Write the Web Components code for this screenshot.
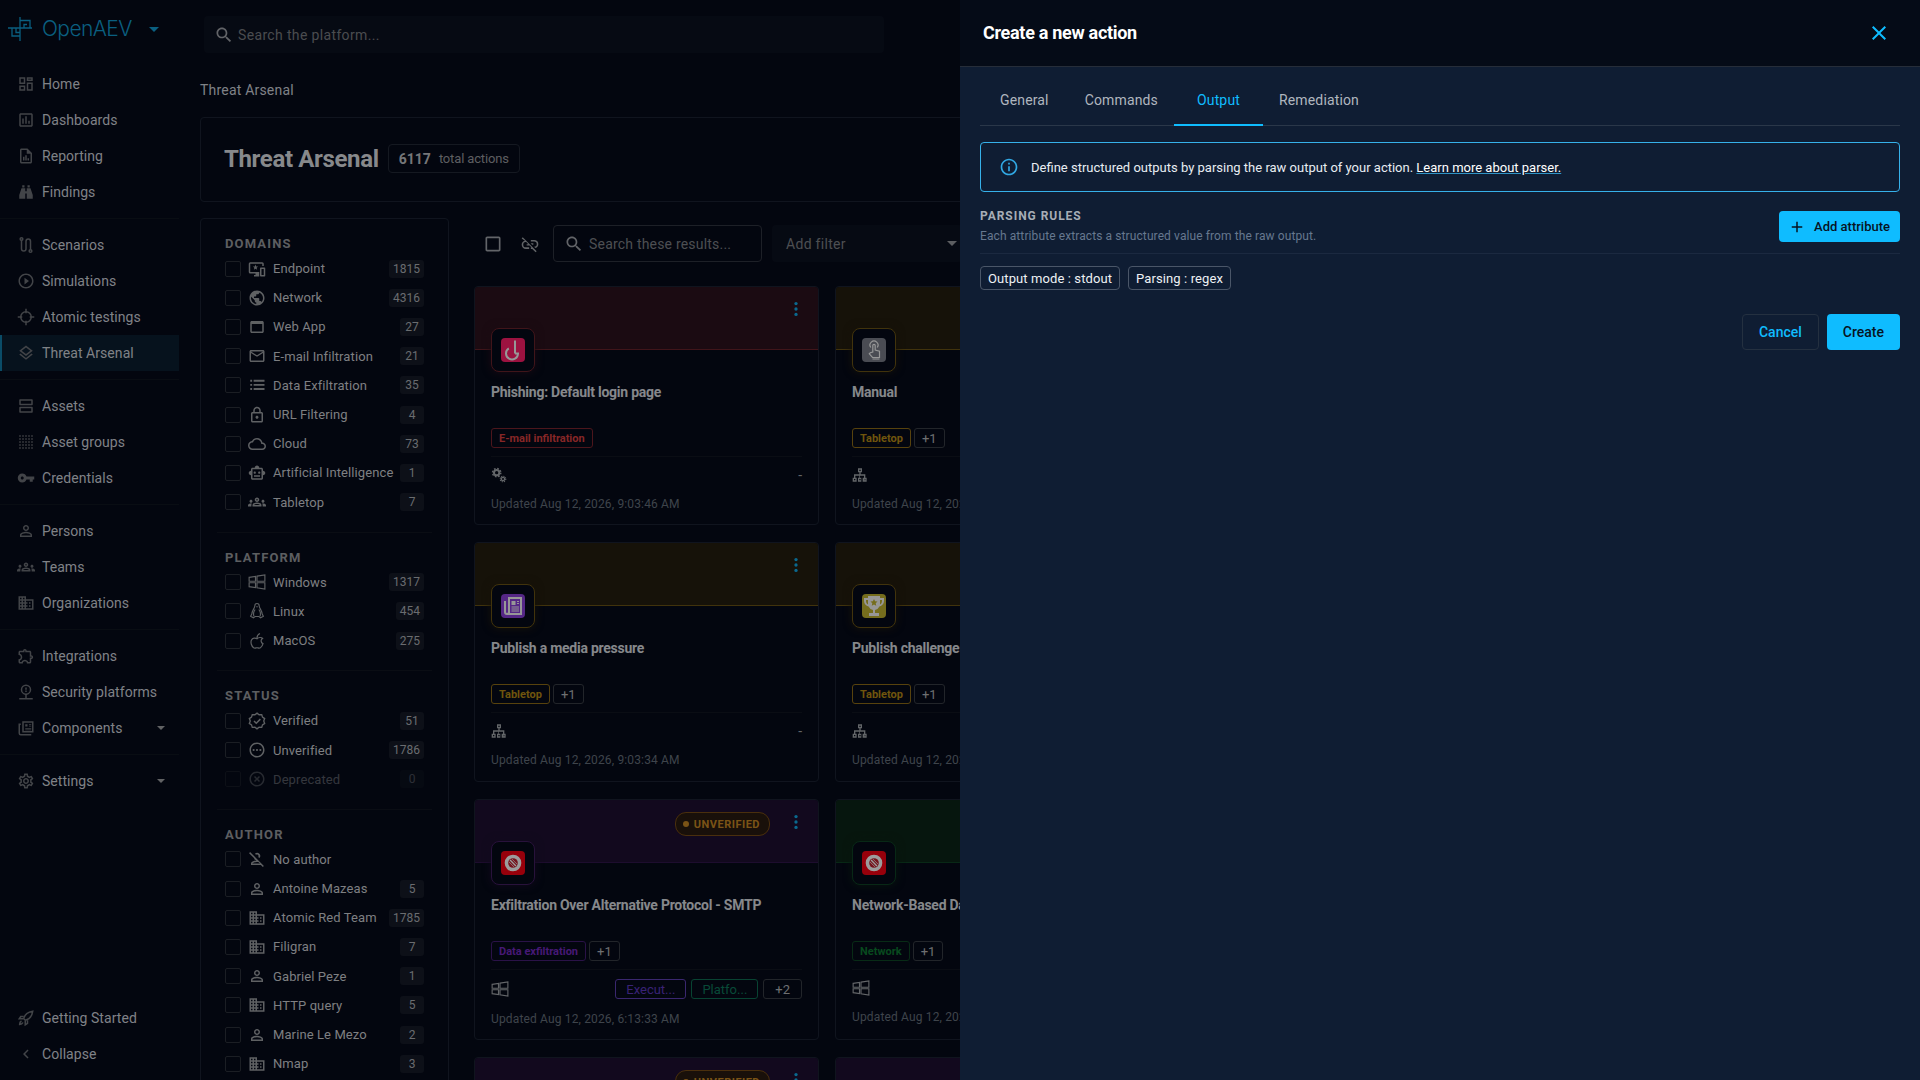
<!DOCTYPE html>
<html>
<head>
<meta charset="utf-8">
<title>OpenAEV</title>
<style>
  :root {
    --font: "Roboto", "Liberation Sans", sans-serif;
    --bg: #050916;
    --line: #171e2c;
    --text: #b7bac0;
    --icon: #5f6267;
    --teal: #0f96cc;
  }
  html, body { margin: 0; height: 100%; overflow: hidden; background: var(--bg); }
  body { font-family: var(--font); font-size: 14px; color: var(--text); }
</style>
</head>
<body>
<oa-app>
  <oa-topbar slot="top"></oa-topbar>
  <oa-sidebar slot="side">
    <oa-nav-item icon="home">Home</oa-nav-item>
    <oa-nav-item icon="chart">Dashboards</oa-nav-item>
    <oa-nav-item icon="report">Reporting</oa-nav-item>
    <oa-nav-item icon="binoculars">Findings</oa-nav-item>
    <oa-nav-divider></oa-nav-divider>
    <oa-nav-item icon="route">Scenarios</oa-nav-item>
    <oa-nav-item icon="play">Simulations</oa-nav-item>
    <oa-nav-item icon="crosshair">Atomic testings</oa-nav-item>
    <oa-nav-item icon="layers" active>Threat Arsenal</oa-nav-item>
    <oa-nav-divider></oa-nav-divider>
    <oa-nav-item icon="dns">Assets</oa-nav-item>
    <oa-nav-item icon="dots">Asset groups</oa-nav-item>
    <oa-nav-item icon="key">Credentials</oa-nav-item>
    <oa-nav-divider></oa-nav-divider>
    <oa-nav-item icon="person">Persons</oa-nav-item>
    <oa-nav-item icon="groups">Teams</oa-nav-item>
    <oa-nav-item icon="domain">Organizations</oa-nav-item>
    <oa-nav-divider></oa-nav-divider>
    <oa-nav-item icon="extension">Integrations</oa-nav-item>
    <oa-nav-item icon="pin">Security platforms</oa-nav-item>
    <oa-nav-item icon="feed" caret>Components</oa-nav-item>
    <oa-nav-divider></oa-nav-divider>
    <oa-nav-item icon="settings" caret>Settings</oa-nav-item>
    <oa-nav-item slot="bottom" icon="rocket">Getting Started</oa-nav-item>
    <oa-nav-item slot="bottom" icon="chevron">Collapse</oa-nav-item>
  </oa-sidebar>
  <oa-arsenal slot="main">
    <oa-filter-panel slot="filters">
      <oa-filter-group title="Domains">
        <oa-filter-row icon="endpoint" count="1815">Endpoint</oa-filter-row>
        <oa-filter-row icon="public" count="4316">Network</oa-filter-row>
        <oa-filter-row icon="webapp" count="27">Web App</oa-filter-row>
        <oa-filter-row icon="mail" count="21">E-mail Infiltration</oa-filter-row>
        <oa-filter-row icon="list" count="35">Data Exfiltration</oa-filter-row>
        <oa-filter-row icon="lock" count="4">URL Filtering</oa-filter-row>
        <oa-filter-row icon="cloud" count="73">Cloud</oa-filter-row>
        <oa-filter-row icon="robot" count="1">Artificial Intelligence</oa-filter-row>
        <oa-filter-row icon="groups" count="7">Tabletop</oa-filter-row>
      </oa-filter-group>
      <oa-filter-group title="Platform">
        <oa-filter-row icon="windows" count="1317">Windows</oa-filter-row>
        <oa-filter-row icon="linux" count="454">Linux</oa-filter-row>
        <oa-filter-row icon="apple" count="275">MacOS</oa-filter-row>
      </oa-filter-group>
      <oa-filter-group title="Status">
        <oa-filter-row icon="verified" count="51">Verified</oa-filter-row>
        <oa-filter-row icon="pending" count="1786">Unverified</oa-filter-row>
        <oa-filter-row icon="off" count="0" disabled>Deprecated</oa-filter-row>
      </oa-filter-group>
      <oa-filter-group title="Author" last>
        <oa-filter-row icon="personoff">No author</oa-filter-row>
        <oa-filter-row icon="person" count="5">Antoine Mazeas</oa-filter-row>
        <oa-filter-row icon="domain" count="1785">Atomic Red Team</oa-filter-row>
        <oa-filter-row icon="domain" count="7">Filigran</oa-filter-row>
        <oa-filter-row icon="person" count="1">Gabriel Peze</oa-filter-row>
        <oa-filter-row icon="domain" count="5">HTTP query</oa-filter-row>
        <oa-filter-row icon="person" count="2">Marine Le Mezo</oa-filter-row>
        <oa-filter-row icon="domain" count="3">Nmap</oa-filter-row>
      </oa-filter-group>
    </oa-filter-panel>
    <oa-toolbar slot="toolbar"></oa-toolbar>

    <oa-card slot="cards" tone="red" tile="hook" name="Phishing: Default login page" updated="Updated Aug 12, 2026, 9:03:46 AM" foot="gears" dash>
      <oa-tag slot="tags" tone="red">E-mail infiltration</oa-tag>
    </oa-card>
    <oa-card slot="cards" tone="yellow" tile="touch" name="Manual" updated="Updated Aug 12, 2026, 9:03:46 AM" foot="tree">
      <oa-tag slot="tags" tone="yellow">Tabletop</oa-tag><oa-tag slot="tags">+1</oa-tag>
    </oa-card>
    <oa-card slot="cards" tone="yellow" tile="news" name="Publish a media pressure" updated="Updated Aug 12, 2026, 9:03:34 AM" foot="tree" dash>
      <oa-tag slot="tags" tone="yellow">Tabletop</oa-tag><oa-tag slot="tags">+1</oa-tag>
    </oa-card>
    <oa-card slot="cards" tone="yellow" tile="trophy" name="Publish challenges" updated="Updated Aug 12, 2026, 9:03:34 AM" foot="tree">
      <oa-tag slot="tags" tone="yellow">Tabletop</oa-tag><oa-tag slot="tags">+1</oa-tag>
    </oa-card>
    <oa-card slot="cards" tone="purple" tile="ban" name="Exfiltration Over Alternative Protocol - SMTP" updated="Updated Aug 12, 2026, 6:13:33 AM" foot="windows" unverified>
      <oa-tag slot="tags" tone="purple">Data exfiltration</oa-tag><oa-tag slot="tags">+1</oa-tag>
      <oa-tag slot="foot" tone="violet" plain>Execut...</oa-tag><oa-tag slot="foot" tone="teal" plain>Platfo...</oa-tag><oa-tag slot="foot" plain wide>+2</oa-tag>
    </oa-card>
    <oa-card slot="cards" tone="green" tile="ban" name="Network-Based Data Exfiltration" updated="Updated Aug 12, 2026, 6:13:33 AM" foot="windows">
      <oa-tag slot="tags" tone="green">Network</oa-tag><oa-tag slot="tags">+1</oa-tag>
    </oa-card>
    <oa-card slot="cards" tone="purple" tile="ban" name="Exfiltration Over Alternative Protocol" updated="" foot="windows" unverified></oa-card>
    <oa-card slot="cards" tone="purple" tile="ban" name="Exfiltration Over C2 Channel" updated="" foot="windows"></oa-card>
  </oa-arsenal>

  <oa-drawer slot="overlay" heading="Create a new action">
    <oa-tabs>
      <oa-tab>General</oa-tab>
      <oa-tab>Commands</oa-tab>
      <oa-tab active>Output</oa-tab>
      <oa-tab>Remediation</oa-tab>
    </oa-tabs>
    <oa-alert>Define structured outputs by parsing the raw output of your action. <a>Learn more about parser.</a></oa-alert>
    <oa-rules heading="Parsing rules" hint="Each attribute extracts a structured value from the raw output.">
      <oa-chip>Output mode : stdout</oa-chip>
      <oa-chip>Parsing : regex</oa-chip>
    </oa-rules>
    <oa-actions>
      <oa-button variant="outline">Cancel</oa-button>
      <oa-button>Create</oa-button>
    </oa-actions>
  </oa-drawer>
</oa-app>

<script>
const ICONS = {
  home: '<path d="M3 3h8v9H3zm2 2v5h4V5zM13 3h8v5h-8zm2 2v1h4V5zM13 10h8v11h-8zm2 2v7h4v-7zM3 14h8v7H3zm2 2v3h4v-3z" fill-rule="evenodd"/>',
  chart: '<path d="M9 17H7v-7h2v7zm4 0h-2V7h2v10zm4 0h-2v-4h2v4zm2 2H5V5h14v14zm0-16H5c-1.100 0-2 .9-2 2v14c0 1.100.9 2 2 2h14c1.100 0 2-.9 2-2V5c0-1.100-.9-2-2-2z"/>',
  report: '<path d="M14 2H6c-1.100 0-2 .9-2 2v16c0 1.100.9 2 2 2h12c1.100 0 2-.9 2-2V8l-6-6zm4 18H6V4h7v5h5v11zM8 18h2v-5H8zm3 0h2v-7h-2zm3 0h2v-3h-2z"/>',
  binoculars: '<path d="M7 3h3v3H7zM14 3h3v3h-3zM6 7h5v4h2V7h5l3 9v5h-8v-7h-2v7H3v-5z"/>',
  route: '<g fill="none" stroke="currentColor" stroke-width="2"><path d="M6 5v12a3 3 0 0 0 6 0V7a3 3 0 0 1 6 0v11"/><circle cx="6" cy="4" r="1.800"/><circle cx="18" cy="20" r="1.800"/></g>',
  play: '<path d="M10 16.500l6-4.500-6-4.500v9zM12 2C6.480 2 2 6.480 2 12s4.480 10 10 10 10-4.480 10-10S17.520 2 12 2zm0 18c-4.410 0-8-3.590-8-8s3.590-8 8-8 8 3.590 8 8-3.590 8-8 8z"/>',
  crosshair: '<g fill="none" stroke="currentColor" stroke-width="2"><circle cx="12" cy="12" r="7"/><path d="M12 1v6M12 17v6M1 12h6M17 12h6"/></g>',
  layers: '<path d="M11.990 18.540l-7.370-5.730L3 14.070l9 7 9-7-1.630-1.270zM12 16l7.360-5.730L21 9l-9-7-9 7 1.630 1.270L12 16zm0-11.470L17.740 9 12 13.470 6.260 9 12 4.530z"/>',
  dns: '<path d="M19 15v4H5v-4h14m1-2H4c-.55 0-1 .45-1 1v6c0 .55.45 1 1 1h16c.55 0 1-.45 1-1v-6c0-.55-.45-1-1-1zM19 5v4H5V5h14m1-2H4c-.55 0-1 .45-1 1v6c0 .55.45 1 1 1h16c.55 0 1-.45 1-1V4c0-.55-.45-1-1-1z"/>',
  dots: '<g fill="currentColor"><rect x="3" y="3" width="2" height="2"/><rect x="7" y="3" width="2" height="2"/><rect x="11" y="3" width="2" height="2"/><rect x="15" y="3" width="2" height="2"/><rect x="19" y="3" width="2" height="2"/><rect x="3" y="7" width="2" height="2"/><rect x="7" y="7" width="2" height="2"/><rect x="11" y="7" width="2" height="2"/><rect x="15" y="7" width="2" height="2"/><rect x="19" y="7" width="2" height="2"/><rect x="3" y="11" width="2" height="2"/><rect x="7" y="11" width="2" height="2"/><rect x="11" y="11" width="2" height="2"/><rect x="15" y="11" width="2" height="2"/><rect x="19" y="11" width="2" height="2"/><rect x="3" y="15" width="2" height="2"/><rect x="7" y="15" width="2" height="2"/><rect x="11" y="15" width="2" height="2"/><rect x="15" y="15" width="2" height="2"/><rect x="19" y="15" width="2" height="2"/><rect x="3" y="19" width="2" height="2"/><rect x="7" y="19" width="2" height="2"/><rect x="11" y="19" width="2" height="2"/><rect x="15" y="19" width="2" height="2"/><rect x="19" y="19" width="2" height="2"/></g>',
  key: '<path d="M7 14c-1.100 0-2-.9-2-2s.9-2 2-2 2 .9 2 2-.9 2-2 2zm5.650-4A5.990 5.990 0 0 0 7 6c-3.310 0-6 2.690-6 6s2.690 6 6 6a5.990 5.990 0 0 0 5.650-4H17v3h4v-3h2v-4H12.650z"/>',
  person: '<path d="M12 5.900c1.160 0 2.100.94 2.100 2.100s-.94 2.100-2.100 2.100S9.900 9.160 9.900 8s.94-2.100 2.100-2.100m0 9c2.970 0 6.100 1.460 6.100 2.100v1.100H5.900V17c0-.64 3.130-2.100 6.100-2.100M12 4C9.790 4 8 5.790 8 8s1.790 4 4 4 4-1.790 4-4-1.790-4-4-4zm0 9c-2.670 0-8 1.340-8 4v3h16v-3c0-2.660-5.330-4-8-4z"/>',
  groups: '<path d="M4 13c1.100 0 2-.9 2-2s-.9-2-2-2-2 .9-2 2 .9 2 2 2zm1.130 1.100c-.37-.06-.74-.1-1.130-.1-.99 0-1.930.21-2.780.58C.48 14.900 0 15.620 0 16.430V18h4.500v-1.610c0-.83.23-1.610.63-2.290zM20 13c1.100 0 2-.9 2-2s-.9-2-2-2-2 .9-2 2 .9 2 2 2zm4 3.430c0-.81-.48-1.530-1.220-1.850-.85-.37-1.790-.58-2.780-.58-.39 0-.76.04-1.130.1.4.68.63 1.460.63 2.290V18H24v-1.570zm-7.760-2.780c-1.170-.52-2.610-.9-4.240-.9-1.630 0-3.070.39-4.240.9C6.680 14.130 6 15.210 6 16.390V18h12v-1.610c0-1.180-.68-2.260-1.760-2.740zM8.070 16c.09-.23.13-.39.91-.69.97-.38 1.990-.56 3.020-.56s2.050.18 3.020.56c.77.3.81.46.91.69H8.070zM12 8c.55 0 1 .45 1 1s-.45 1-1 1-1-.45-1-1 .45-1 1-1m0-2c-1.660 0-3 1.340-3 3s1.340 3 3 3 3-1.340 3-3-1.340-3-3-3z"/>',
  domain: '<path d="M12 7V3H2v18h20V7H12zM6 19H4v-2h2v2zm0-4H4v-2h2v2zm0-4H4V9h2v2zm0-4H4V5h2v2zm4 12H8v-2h2v2zm0-4H8v-2h2v2zm0-4H8V9h2v2zm0-4H8V5h2v2zm10 12h-8v-2h2v-2h-2v-2h2v-2h-2V9h8v10zm-2-8h-2v2h2v-2zm0 4h-2v2h2v-2z"/>',
  extension: '<path d="M10.500 4.500c.28 0 .5.22.5.5v2h6v6h2c.28 0 .5.22.5.5s-.22.5-.5.5h-2v6h-2.120c-.68-1.750-2.390-3-4.380-3s-3.700 1.250-4.380 3H4v-2.120c1.750-.68 3-2.390 3-4.380 0-1.990-1.240-3.700-2.990-4.380L4 7h6V5c0-.28.22-.5.5-.5m0-2C9.120 2.500 8 3.620 8 5H4c-1.100 0-1.990.9-1.990 2v3.800h.29c1.490 0 2.700 1.210 2.700 2.700s-1.210 2.700-2.700 2.700H2V20c0 1.100.9 2 2 2h3.800v-.3c0-1.490 1.210-2.700 2.700-2.700s2.700 1.210 2.700 2.700v.3H17c1.100 0 2-.9 2-2v-4c1.380 0 2.500-1.120 2.500-2.500S20.380 11 19 11V7c0-1.100-.9-2-2-2h-4c0-1.380-1.120-2.500-2.500-2.500z"/>',
  pin: '<path d="M12 2a7 7 0 0 0-7 7c0 3.600 2.600 6.100 6 6.900V20H3v2h18v-2h-8v-4.100c3.400-.8 6-3.300 6-6.900a7 7 0 0 0-7-7zm0 2a5 5 0 1 1 0 10 5 5 0 0 1 0-10zm-1 2v3h2V6zm0 4v2h2v-2z" fill-rule="evenodd"/>',
  feed: '<path d="M7 3h15v15H7zm2 2v11h11V5zM11 7h3v3h-3zm5 0h3v1h-3zm0 2h3v1h-3zm-5 3h8v1h-8zm0 2h8v1h-8zM2 6h3v2H4v11c0 .6.4 1 1 1h14v2H5a3 3 0 0 1-3-3z" fill-rule="evenodd"/>',
  settings: '<path d="M19.430 12.980c.04-.32.07-.64.07-.98 0-.34-.03-.66-.07-.98l2.110-1.650c.19-.15.24-.42.12-.64l-2-3.460c-.09-.16-.26-.25-.44-.25-.06 0-.12.01-.17.03l-2.490 1c-.52-.4-1.080-.73-1.690-.98l-.38-2.650C14.460 2.180 14.250 2 14 2h-4c-.25 0-.46.18-.49.42l-.38 2.650c-.61.25-1.170.59-1.690.98l-2.490-1c-.06-.02-.12-.03-.18-.03-.17 0-.34.09-.43.25l-2 3.460c-.13.22-.07.49.12.64l2.110 1.650c-.04.32-.07.65-.07.98 0 .33.03.66.07.98l-2.110 1.650c-.19.15-.24.42-.12.64l2 3.460c.09.16.26.25.44.25.06 0 .12-.01.17-.03l2.490-1c.52.4 1.080.73 1.690.98l.38 2.650c.03.24.24.42.49.42h4c.25 0 .46-.18.49-.42l.38-2.650c.61-.25 1.170-.59 1.690-.98l2.490 1c.06.02.12.03.18.03.17 0 .34-.09.43-.25l2-3.460c.12-.22.07-.49-.12-.64l-2.110-1.650zm-1.980-1.710c.04.31.05.52.05.73 0 .21-.02.43-.05.73l-.14 1.130.89.7 1.080.84-.7 1.210-1.270-.51-1.040-.42-.9.68c-.43.32-.84.56-1.250.73l-1.060.43-.16 1.130-.2 1.350h-1.400l-.19-1.350-.16-1.130-1.060-.43c-.43-.18-.83-.41-1.230-.71l-.91-.7-1.060.43-1.270.51-.7-1.210 1.080-.84.89-.7-.14-1.130c-.03-.31-.05-.54-.05-.74s.02-.43.05-.73l.14-1.130-.89-.7-1.080-.84.7-1.210 1.270.51 1.040.42.9-.68c.43-.32.84-.56 1.250-.73l1.060-.43.16-1.130.2-1.350h1.390l.19 1.350.16 1.130 1.060.43c.43.18.83.41 1.230.71l.91.7 1.060-.43 1.270-.51.7 1.210-1.070.85-.89.7.14 1.130zM12 8c-2.210 0-4 1.790-4 4s1.790 4 4 4 4-1.790 4-4-1.790-4-4-4zm0 6c-1.100 0-2-.9-2-2s.9-2 2-2 2 .9 2 2-.9 2-2 2z"/>',
  rocket: '<g fill="none" stroke="currentColor" stroke-width="2"><path d="M9 13c1-5 5-9 12-10-1 7-5 11-10 12z"/><path d="M9 10H5l-2 3h5M14 15v4l-3 2v-5"/><path d="M6 16c-2 1-2.500 3-2.500 4.500C5 20.500 7 20 8 18"/></g>',
  chevron: '<path d="M15.400 7.400 14 6l-6 6 6 6 1.400-1.400L10.800 12z"/>',
  endpoint: '<path d="M21 3H3a2 2 0 0 0-2 2v11a2 2 0 0 0 2 2h7v2H8v2h7v-6H3V5h16v3h2V5a2 2 0 0 0-2-2zM22 10h-5a1 1 0 0 0-1 1v10a1 1 0 0 0 1 1h5a1 1 0 0 0 1-1V11a1 1 0 0 0-1-1zm-1 10h-3v-8h3zM10 6l1 2.500h2.500l-2 1.800.7 2.700-2.200-1.500L7.800 13l.7-2.700-2-1.800H9z" fill-rule="evenodd"/>',
  public: '<path d="M12 2C6.480 2 2 6.480 2 12s4.480 10 10 10 10-4.480 10-10S17.520 2 12 2zm-1 17.930c-3.950-.49-7-3.850-7-7.930 0-.62.08-1.210.21-1.790L9 15v1c0 1.100.9 2 2 2v1.930zm6.900-2.540c-.26-.81-1-1.390-1.900-1.390h-1v-3c0-.55-.45-1-1-1H8v-2h2c.55 0 1-.45 1-1V7h2c1.100 0 2-.9 2-2v-.41c2.930 1.190 5 4.060 5 7.410 0 2.080-.8 3.970-2.100 5.390z"/>',
  webapp: '<path d="M19 4H5c-1.110 0-2 .9-2 2v12c0 1.100.89 2 2 2h14c1.100 0 2-.9 2-2V6c0-1.100-.89-2-2-2zm0 14H5V8h14v10z"/>',
  mail: '<path d="M20 4H4c-1.100 0-1.990.9-1.990 2L2 18c0 1.100.9 2 2 2h16c1.100 0 2-.9 2-2V6c0-1.100-.9-2-2-2zm0 14H4V8l8 5 8-5v10zm-8-7L4 6h16l-8 5z"/>',
  list: '<path d="M3 5h2.500v2.500H3zM7.500 5H22v2.500H7.500zM3 10.500h2.500V13H3zM7.500 10.500H22V13H7.500zM3 16h2.500v2.500H3zM7.500 16H22v2.500H7.500z"/>',
  lock: '<path d="M18 8h-1V6c0-2.760-2.240-5-5-5S7 3.240 7 6v2H6c-1.100 0-2 .9-2 2v10c0 1.100.9 2 2 2h12c1.100 0 2-.9 2-2V10c0-1.100-.9-2-2-2zM9 6c0-1.660 1.340-3 3-3s3 1.340 3 3v2H9V6zm9 14H6V10h12v10zm-6-3c1.100 0 2-.9 2-2s-.9-2-2-2-2 .9-2 2 .9 2 2 2z"/>',
  cloud: '<path d="M12 6c2.620 0 4.880 1.860 5.390 4.430l.3 1.500 1.530.11c1.560.1 2.780 1.410 2.780 2.960 0 1.650-1.350 3-3 3H6c-2.210 0-4-1.790-4-4 0-2.050 1.530-3.760 3.560-3.970l1.070-.11.5-.95C8.080 7.140 9.940 6 12 6m0-2C9.110 4 6.600 5.640 5.350 8.040 2.340 8.360 0 10.910 0 14c0 3.310 2.690 6 6 6h13c2.760 0 5-2.240 5-5 0-2.640-2.050-4.780-4.650-4.960C18.670 6.590 15.640 4 12 4z"/>',
  robot: '<path d="M20 9V7c0-1.100-.9-2-2-2h-3c0-1.660-1.340-3-3-3S9 3.340 9 5H6c-1.100 0-2 .9-2 2v2c-1.660 0-3 1.340-3 3s1.340 3 3 3v4c0 1.100.9 2 2 2h12c1.100 0 2-.9 2-2v-4c1.660 0 3-1.340 3-3s-1.340-3-3-3zm-2 10H6V7h12v12zm-9-6c-.83 0-1.500-.67-1.500-1.500S8.170 10 9 10s1.500.67 1.500 1.500S9.830 13 9 13zm7.500-1.500c0 .83-.67 1.500-1.500 1.500s-1.500-.67-1.500-1.500.67-1.500 1.500-1.500 1.500.67 1.500 1.500zM8 15h8v2H8v-2z"/>',
  windows: '<path d="M1.500 5.800 10 4.500V11H1.500zM12 4.200 22.500 2.500V11H12zM1.500 13H10v6.500l-8.500-1.300zM12 13h10.500v8.500L12 19.800z" fill="none" stroke="currentColor" stroke-width="1.500"/>',
  linux: '<g fill="none" stroke="currentColor" stroke-width="1.500"><path d="M12 2c-1.900 0-3 1.500-3 3.500 0 2.700-3.800 6-3.800 10.300L3.500 19l3.700 2 2.300-1.600h5l2.300 1.600 3.700-2-1.700-3.200C18.800 11.500 15 8.200 15 5.500 15 3.500 13.900 2 12 2z"/><path d="M9.500 10c-1.800 2.500-2.600 6-1.600 9M14.500 10c1.800 2.500 2.600 6 1.600 9"/></g><circle cx="12" cy="6.300" r="1"/>',
  apple: '<g fill="none" stroke="currentColor" stroke-width="1.600"><path d="M12 9c-2-1.500-6-1.500-7.500 2-1.200 3 0 8 3 10 1.500 1 3.500 0 4.500 0s3 1 4.500 0c2-1.400 3-3.500 3.500-5.500-3-1-3.500-5.500-.5-7-1.500-1.800-5.500-1.500-7.500.5z"/><path d="M12 8c0-2.500 1.500-5 4-6"/></g>',
  verified: '<path d="M12 1.500l2.800 2.100 3.500-.1 1 3.300 2.900 2L21 12l1.200 3.200-2.900 2-1 3.300-3.500-.1L12 22.500l-2.800-2.100-3.500.1-1-3.300-2.900-2L3 12 1.800 8.800l2.900-2 1-3.300 3.500.1z" fill="none" stroke="currentColor" stroke-width="1.800"/><path d="M8 12l3 3 5.500-5.500" fill="none" stroke="currentColor" stroke-width="2"/>',
  pending: '<path d="M12 2C6.480 2 2 6.480 2 12s4.480 10 10 10 10-4.480 10-10S17.520 2 12 2zm0 18c-4.420 0-8-3.580-8-8s3.580-8 8-8 8 3.580 8 8-3.580 8-8 8z"/><circle cx="7.500" cy="12" r="1.400"/><circle cx="12" cy="12" r="1.400"/><circle cx="16.500" cy="12" r="1.400"/>',
  off: '<path d="M14.590 8 12 10.590 9.410 8 8 9.410 10.590 12 8 14.590 9.410 16 12 13.410 14.590 16 16 14.590 13.410 12 16 9.410zM12 2C6.470 2 2 6.470 2 12s4.470 10 10 10 10-4.470 10-10S17.530 2 12 2zm0 18c-4.410 0-8-3.590-8-8s3.590-8 8-8 8 3.590 8 8-3.590 8-8 8z"/>',
  personoff: '<path d="M12 5.900c1.160 0 2.100.94 2.100 2.100 0 .5-.17.96-.46 1.320l1.400 1.400A4 4 0 0 0 9.280 5l1.400 1.400c.36-.3.82-.5 1.320-.5zM2.800 2.800 1.400 4.200 8 10.800a4 4 0 0 0 3.200 3.200C8 14.200 4 15.600 4 18v2h13.200l2.600 2.600 1.400-1.400zM5.900 18c.2-.7 3-2 6.100-2 .8 0 1.500.1 2.200.2L16 18z"/>',
  gears: '<g fill="none" stroke="currentColor"><circle cx="8.500" cy="8.500" r="4" stroke-width="3"/><circle cx="8.500" cy="8.500" r="6.200" stroke-width="2.200" stroke-dasharray="2.500 2.370"/><circle cx="18" cy="18" r="2.500" stroke-width="2"/><circle cx="18" cy="18" r="4.200" stroke-width="1.600" stroke-dasharray="1.800 1.500"/></g>',
  tree: '<path d="M9 2h6v6h-2v3h7v5h2v6h-6v-6h2v-3h-6v3h2v6H9v-6h2v-3H5v3h2v6H1v-6h2v-5h8V8H9zm2 2v2h2V4zM3 18v2h2v-2zm8 0v2h2v-2zm8 0v2h1v-2z" fill-rule="evenodd"/>',
  search: '<path d="M15.500 14h-.79l-.28-.27C15.410 12.590 16 11.110 16 9.500 16 5.910 13.090 3 9.500 3S3 5.910 3 9.500 5.910 16 9.500 16c1.610 0 3.090-.59 4.230-1.570l.27.28v.79l5 4.990L20.490 19l-4.990-5zm-6 0C7.010 14 5 11.990 5 9.500S7.010 5 9.500 5 14 7.010 14 9.500 11.990 14 9.500 14z"/>',
  checkbox: '<path d="M19 5v14H5V5h14m0-2H5c-1.100 0-2 .9-2 2v14c0 1.100.9 2 2 2h14c1.100 0 2-.9 2-2V5c0-1.100-.9-2-2-2z"/>',
  linkoff: '<path d="M2 5.270 3.280 4 20 20.720 18.730 22l-4.050-4.050H13v-1.900h.78l-2.270-2.270H8v-1.600h1.910L7.430 9.700A3.100 3.100 0 0 0 3.900 12.800 3.100 3.100 0 0 0 7 15.950h4v1.900H7a5 5 0 0 1-5-5 5 5 0 0 1 3.900-4.870zM17 7.050a5 5 0 0 1 5 5 5 5 0 0 1-3.500 4.770l-1.600-1.600A3.100 3.100 0 0 0 20.100 12 3.100 3.100 0 0 0 17 8.950h-4v-1.900zM16 11.200v1.600h-1.500l-1.600-1.600z"/>',
  more: '<circle cx="12" cy="5.500" r="2"/><circle cx="12" cy="12" r="2"/><circle cx="12" cy="18.500" r="2"/>',
  close: '<path d="M19 6.410 17.590 5 12 10.590 6.410 5 5 6.410 10.590 12 5 17.590 6.410 19 12 13.410 17.590 19 19 17.590 13.410 12z"/>',
  info: '<path d="M11 7h2v2h-2zm0 4h2v6h-2zm1-9C6.480 2 2 6.480 2 12s4.480 10 10 10 10-4.480 10-10S17.520 2 12 2zm0 18c-4.410 0-8-3.590-8-8s3.590-8 8-8 8 3.590 8 8-3.590 8-8 8z"/>',
  plus: '<path d="M19 13h-6v6h-2v-6H5v-2h6V5h2v6h6z"/>',
  hook: '<path d="M14 2.500v13M7.800 10.400A6 6 0 1 0 17 15.500H14" fill="none" stroke="currentColor" stroke-width="2"/>',
  touch: '<g fill="none" stroke="currentColor" stroke-width="1.200"><path d="M8.800 9.500a4 4 0 1 1 6.400 0"/><path d="M10.800 14V7.500a1.200 1.200 0 0 1 2.400 0V12l4.300 1.200V19.500H10.500L7.300 15.800l1-1z"/><path d="M10.500 21h7"/></g>',
  news: '<path d="M6 3h15v18H6a3 3 0 0 1-3-3V7h2v11a1 1 0 0 0 2 0V3zM9 5v14h10V5zM10.500 7h4v4h-4zM16 7h2v1h-2zm0 2h2v1h-2zM10.500 12.500H18v1h-7.500zm0 2H18v1h-7.500zm0 2H18v1h-7.500z" fill-rule="evenodd"/>',
  trophy: '<path d="M6 2h12v2h4v3c0 2.800-2 5-4.600 5.400A6 6 0 0 1 13 15.900V19h4v3H7v-3h4v-3.100a6 6 0 0 1-4.400-3.500C4 12 2 9.800 2 7V4h4zM4 6v1c0 1.600 1 3 2 3.400V6zm16 0h-2v4.400c1-.4 2-1.800 2-3.400zM12 5l1.100 2.300 2.400.3-1.800 1.700.5 2.400-2.200-1.200-2.200 1.200.5-2.400-1.800-1.700 2.400-.3z" fill-rule="evenodd"/>',
  ban: '<circle cx="12" cy="12" r="10" fill="#e0e0e0"/><circle cx="12" cy="12" r="5.800" fill="#a81c2a"/><path d="M8.500 8.500l7 7" stroke="#e0e0e0" stroke-width="1.600"/><path d="M10.500 7l6.500 6.500M7 10.500l6.500 6.500" stroke="#e0e0e0" stroke-width=".8"/>'
};

// every element builds its shadow root the same way
class OaElement extends HTMLElement {
  constructor() {
    super();
    this.attachShadow({ mode: "open" });
  }
  connectedCallback() {
    this.shadowRoot.innerHTML = this.render();
  }
  attr(name, fallback = "") {
    return this.hasAttribute(name) ? this.getAttribute(name) : fallback;
  }
}

const svg = (name, size) => `<oa-icon name="${name}" size="${size}"></oa-icon>`;

class OaIcon extends OaElement {
  render() {
    const size = this.attr("size", "24");
    return `<style>:host{display:inline-flex;flex:none;width:${size}px;height:${size}px}svg{width:100%;height:100%;display:block;fill:currentColor}</style>
      <svg viewBox="0 0 24 24">${ICONS[this.attr("name")] || ""}</svg>`;
  }
}

class OaApp extends OaElement {
  render() {
    return `<style>
      :host{display:block;position:relative;width:1920px;height:1080px;overflow:hidden;background:var(--bg)}
      .body{display:flex;height:1014px}
      .backdrop{position:absolute;inset:0;background:rgba(0,0,0,.3)}
    </style>
    <slot name="top"></slot>
    <div class="body"><slot name="side"></slot><slot name="main"></slot></div>
    <div class="backdrop"></div>
    <slot name="overlay"></slot>`;
  }
}

class OaTopbar extends OaElement {
  render() {
    return `<style>
      :host{display:flex;height:66px;box-sizing:border-box;padding-top:16px}
      .brand{width:204px;display:flex;height:26px;align-items:center;padding-left:8px;box-sizing:border-box;color:#0f88b8}
      .brand svg{width:24px;height:24px;flex:none;fill:none;stroke:currentColor;stroke-width:1.300}
      .name{font:300 21px/26px Inter,var(--font);letter-spacing:-.6px;margin-left:10px}
      .caret{width:0;height:0;border:5px solid transparent;border-top-color:currentColor;border-bottom:0;margin-left:17px}
      .search{width:680px;height:37px;background:#0a0f1c;border-radius:4px;display:flex;align-items:center;padding-left:10px;box-sizing:border-box;color:#8d9095;gap:4px}
      .search span{color:#6a6d72;font-size:14px;letter-spacing:.35px}
    </style>
    <div class="brand">
      <svg viewBox="0 0 24 24"><path d="M0 11h24M12 0v24M12 3.500h10V11M16 11V7.500h3M4 11v8h8M8 11v4.500h4"/></svg>
      <span class="name">OpenAEV</span><i class="caret"></i>
    </div>
    <div class="search">${svg("search", 20)}<span>Search the platform...</span></div>`;
  }
}

class OaSidebar extends OaElement {
  render() {
    return `<style>
      :host{display:flex;flex-direction:column;width:180px;flex:none;height:1014px;padding-bottom:8px;box-sizing:border-box}
      .bottom{margin-top:auto}
    </style>
    <slot></slot>
    <div class="bottom"><slot name="bottom"></slot></div>`;
  }
}

class OaNavItem extends OaElement {
  render() {
    const active = this.hasAttribute("active");
    return `<style>
      :host{display:flex;align-items:center;height:36px;width:179px;box-sizing:border-box;padding-left:17px;gap:7px;color:var(--text);font-size:14px;letter-spacing:.05px;
        ${active ? "background:#0a1a2a;box-shadow:inset 2px 0 0 #0f6d94;" : ""}}
      oa-icon{color:var(--icon)}
      .wrap{flex:1}
      .c{width:0;height:0;border:4.500px solid transparent;border-top-color:#8b8d90;border-bottom:0;margin-right:14px}
    </style>
    ${svg(this.attr("icon"), 18)}
    <span class="wrap"><slot></slot></span>
    ${this.hasAttribute("caret") ? '<i class="c"></i>' : ""}`;
  }
}

class OaNavDivider extends OaElement {
  render() {
    return `<style>:host{display:block;width:179px;height:1px;background:#0e131c;margin:8px 0}</style>`;
  }
}

class OaArsenal extends OaElement {
  render() {
    return `<style>
      :host{display:block;flex:1;min-width:0;padding:14px 0 0 20px;overflow:hidden}
      .crumb{line-height:20px;font-size:14px;letter-spacing:.2px;color:var(--text);margin-bottom:17px}
      .head{display:flex;align-items:center;height:85px;box-sizing:border-box;border:1px solid var(--line);border-radius:4px;padding:0 0 2px 23px;margin-bottom:16px}
      h1{margin:0;font:700 24px/32px Roboto,var(--font);letter-spacing:-.35px;color:#c2c4c8}
      .total{display:flex;align-items:center;height:27px;margin-left:9px;padding:0 10px;border:1px solid #1f2430;border-radius:4px;font-size:13px;letter-spacing:-.15px;color:#85878b;gap:8px}
      .total b{color:#a8aaad;font-size:14px;letter-spacing:0}
      .cols{display:grid;grid-template-columns:249px 1fr;column-gap:25px}
      .cards{display:grid;grid-template-columns:345px 345px;grid-template-rows:239px 240px 241px 200px;gap:17px 16px;margin-top:24px}
    </style>
    <div class="crumb">Threat Arsenal</div>
    <div class="head"><h1>Threat Arsenal</h1><div class="total"><b>6117</b><span>total actions</span></div></div>
    <div class="cols">
      <slot name="filters"></slot>
      <div><slot name="toolbar"></slot><div class="cards"><slot name="cards"></slot></div></div>
    </div>`;
  }
}

class OaFilterPanel extends OaElement {
  render() {
    return `<style>:host{display:block;height:900px;box-sizing:border-box;border:1px solid var(--line);border-radius:4px;padding:16px 16px 0}</style><slot></slot>`;
  }
}

class OaFilterGroup extends OaElement {
  render() {
    const last = this.hasAttribute("last");
    return `<style>
      :host{display:block;padding:0 0 ${last ? 0 : 15}px;margin-bottom:16px;${last ? "" : "border-bottom:1px solid #0f141e;"}}
      .t{padding-left:8px;height:19px;font:700 13px/18px Roboto,var(--font);letter-spacing:1.150px;text-transform:uppercase;color:#85878b}
    </style>
    <div class="t">${this.attr("title")}</div><slot></slot>`;
  }
}

class OaFilterRow extends OaElement {
  render() {
    const count = this.attr("count");
    const off = this.hasAttribute("disabled");
    return `<style>
      :host{display:flex;align-items:center;height:29.200px;padding:0 8px;${off ? "opacity:.4;" : ""}}
      .box{width:14px;height:14px;border:1px solid #282c34;border-radius:2px;flex:none}
      oa-icon{margin:0 7px 0 7px;color:#888b8f}
      .label{flex:1;white-space:nowrap;font-size:13px;letter-spacing:.1px;color:#b4b6ba}
      .count{min-width:12px;height:18px;line-height:18px;padding:0 4px;text-align:center;background:#131823;border-radius:3px;font-size:12px;color:#989ba0;margin-left:auto}
      .count.s{min-width:16px}
    </style>
    <i class="box"></i>${svg(this.attr("icon"), 18)}
    <span class="label"><slot></slot></span>
    ${count ? `<span class="count ${count.length < 3 ? "s" : ""}">${count}</span>` : ""}`;
  }
}

class OaToolbar extends OaElement {
  render() {
    return `<style>
      :host{display:flex;align-items:center;height:37px;margin-top:7px;color:#8d9095}
      .a{display:flex;width:36px;margin-left:1px;justify-content:center;margin-right:1px}
      .b{display:flex;width:36px;justify-content:center;margin-right:5px}
      .search{width:209px;height:37px;box-sizing:border-box;border:1px solid #2a2f38;border-radius:4px;display:flex;align-items:center;padding-left:10px;gap:5px;margin-right:10px}
      .search span{color:#6f7276;font-size:14px;letter-spacing:.2px}
      .filter{width:190px;height:37px;background:#0a0f1c;border-radius:4px;display:flex;align-items:center;padding:0 5px 0 14px;box-sizing:border-box;justify-content:space-between;color:#6f7276;font-size:14px;letter-spacing:.3px}
      i{width:0;height:0;border:5px solid transparent;border-top-color:#85878b;border-bottom:0}
    </style>
    <span class="a">${svg("checkbox", 20)}</span>
    <span class="b">${svg("linkoff", 20)}</span>
    <div class="search">${svg("search", 20)}<span>Search these results...</span></div>
    <div class="filter"><span>Add filter</span><i></i></div>`;
  }
}

const TONES = {
  red:    { band: "#27101a", line: "#5c1f26", tile: "#5c1f26" },
  yellow: { band: "#201a0d", line: "#5e4a12", tile: "#5e4a12" },
  purple: { band: "#1a0e2b", line: "#2a1342", tile: "#3a1a55" },
  green:  { band: "#0a2015", line: "#0c3a20", tile: "#0c3a20" }
};
const TILES = { hook: "#e01a5c", touch: "#6a6e78", news: "#7a38c0", trophy: "#a89c2a", ban: "#d80010" };

class OaCard extends OaElement {
  render() {
    const tone = TONES[this.attr("tone")] || TONES.red;
    const tile = this.attr("tile");
    const foot = this.attr("foot");
    const pill = this.hasAttribute("unverified")
      ? `<div class="pill"><i></i>UNVERIFIED</div>` : "";
    return `<style>
      :host{display:block;position:relative;box-sizing:border-box;border:1px solid var(--line);border-radius:4px;overflow:hidden}
      .band{height:63px;box-sizing:border-box;background:${tone.band};border-bottom:1px solid ${tone.line}}
      .pill{position:absolute;top:12px;right:48px;height:22px;display:flex;align-items:center;gap:5px;padding:0 9px 0 7px;border:1px solid #6b4413;border-radius:11px;background:#24180f;font:700 11px/1 Roboto,var(--font);letter-spacing:.5px;color:#b07820}
      .pill i{width:6px;height:6px;border-radius:50%;background:#b07820}
      .more{position:absolute;top:12px;right:12px;color:var(--teal)}
      .body{padding:0 16px}
      .tilebox{width:44px;height:44px;box-sizing:border-box;margin-top:-22px;border:1px solid ${tone.tile};border-radius:8px;background:var(--bg);display:flex;align-items:center;justify-content:center;position:relative;box-shadow:0 0 8px ${tone.band}}
      .tile{width:24px;height:24px;border-radius:4px;background:${TILES[tile]};display:flex;align-items:center;justify-content:center;color:#d8d8d8}
      .name{margin-top:10px;height:20px;line-height:20px;font-weight:700;font-size:14px;letter-spacing:-.25px;color:#c0c3c8;white-space:nowrap}
      .tags{display:flex;gap:3px;margin-top:26px;height:20px}
      .foot{display:flex;align-items:center;justify-content:space-between;margin-top:8px;padding-top:9px;border-top:1px solid #0f141e;min-height:18px;color:#8f9297}
      .foot .r{display:flex;gap:5px;align-items:center;font-size:14px;color:#8f9195}
      .upd{margin-top:10px;line-height:20px;font-size:12px;letter-spacing:.15px;color:#5a626c;white-space:nowrap}
    </style>
    <div class="band"></div>${pill}
    <span class="more">${svg("more", 20)}</span>
    <div class="body">
      <div class="tilebox"><div class="tile">${svg(tile, tile === "ban" ? 20 : 24)}</div></div>
      <div class="name">${this.attr("name")}</div>
      <div class="tags"><slot name="tags"></slot></div>
      <div class="foot">${svg(foot, foot === "windows" ? 18 : 16)}
        <div class="r"><slot name="foot"></slot>${this.hasAttribute("dash") ? "<span>-</span>" : ""}</div>
      </div>
      <div class="upd">${this.attr("updated")}</div>
    </div>`;
  }
}

const TAG_TONES = {
  red: ["#6d2029", "#c03838"], yellow: ["#7d5f14", "#a07a14"], purple: ["#3d1a66", "#6624a8"],
  green: ["#0c3e20", "#0c6a2c"], violet: ["#53389f", "#5231a8"], teal: ["#0c6048", "#0c6a50"]
};

class OaTag extends OaElement {
  render() {
    const [border, color] = TAG_TONES[this.attr("tone")] || ["#32363d", "#9ea0a3"];
    const plain = this.hasAttribute("plain");
    const toned = this.hasAttribute("tone") && !plain;
    return `<style>
      :host{display:inline-flex;align-items:center;justify-content:center;height:20px;box-sizing:border-box;border:1px solid ${border};border-radius:3px;
        padding:0 ${this.hasAttribute("wide") ? 11 : plain ? 10 : 7}px;color:${color};font-size:${toned ? 11 : 13}px;font-weight:${toned ? 700 : 400};white-space:nowrap}
    </style><slot></slot>`;
  }
}

class OaDrawer extends OaElement {
  render() {
    return `<style>
      :host{position:absolute;top:0;right:0;bottom:0;width:960px;background:#0f1d33;display:block;color:#fff}
      header{height:67px;box-sizing:border-box;background:#050b17;border-bottom:1px solid #262d39;display:flex;align-items:center;justify-content:space-between;padding:0 29px 0 23px}
      h2{margin:0;font:700 18px/24px Roboto,var(--font);letter-spacing:-.3px}
      .x{color:#0fbcff;display:flex}
      .content{padding:0 20px}
    </style>
    <header><h2>${this.attr("heading")}</h2><span class="x">${svg("close", 24)}</span></header>
    <div class="content"><slot></slot></div>`;
  }
}

class OaTabs extends OaElement {
  render() {
    return `<style>:host{display:flex;height:59px;box-sizing:border-box;border-bottom:1px solid #2a3749}</style><slot></slot>`;
  }
}

class OaTab extends OaElement {
  render() {
    const active = this.hasAttribute("active");
    return `<style>
      :host{display:flex;align-items:center;justify-content:center;box-sizing:border-box;height:59px;margin-right:-4px;font-size:14px;letter-spacing:.15px;
        padding:${active ? "9px 23px 0" : "7px 20px 0"};
        color:${active ? "#0fbcff" : "#b0b6bf"};${active ? "border-bottom:2px solid #0fbcff;" : ""}}
    </style><slot></slot>`;
  }
}

class OaAlert extends OaElement {
  render() {
    return `<style>
      :host{display:flex;align-items:center;height:50px;box-sizing:border-box;margin-top:16px;border:1px solid #36b1ea;border-radius:4px;padding-left:18px;gap:12px;font-size:13px;color:#e8edf2}
      oa-icon{color:#31a8e3}
      ::slotted(a){color:#fff;text-decoration:underline;text-decoration-color:#2f93c5}
    </style>${svg("info", 20)}<span><slot></slot></span>`;
  }
}

class OaRules extends OaElement {
  render() {
    return `<style>
      :host{display:block;margin-top:19px}
      .top{display:flex;justify-content:space-between;height:42px;border-bottom:1px solid #1b2940;align-items:flex-start}
      h3{margin:-3px 0 0;font:700 12px/16px Roboto,var(--font);letter-spacing:.95px;text-transform:uppercase;color:#a7adb6}
      p{margin:4px 0 0;font-size:12px;line-height:16px;letter-spacing:.1px;color:#66788f}
      .chips{display:flex;gap:8px;margin-top:12px}
    </style>
    <div class="top">
      <div><h3>${this.attr("heading")}</h3><p>${this.attr("hint")}</p></div>
      <oa-button small icon="plus">Add attribute</oa-button>
    </div>
    <div class="chips"><slot></slot></div>`;
  }
}

class OaChip extends OaElement {
  render() {
    return `<style>:host{display:inline-flex;align-items:center;height:24px;box-sizing:border-box;padding:0 7px;border:1px solid #4a5668;border-radius:4px;font-size:13px;letter-spacing:.1px;color:#eef1f4}</style><slot></slot>`;
  }
}

class OaActions extends OaElement {
  render() {
    return `<style>:host{display:flex;justify-content:flex-end;gap:8px;margin-top:24px}</style><slot></slot>`;
  }
}

class OaButton extends OaElement {
  render() {
    const outline = this.attr("variant") === "outline";
    const small = this.hasAttribute("small");
    return `<style>
      :host{display:inline-flex;align-items:center;box-sizing:border-box;border-radius:4px;font-size:${small ? 13 : 14}px;font-weight:500;white-space:nowrap;flex:none;
        height:${small ? 31 : 36}px;padding:${small ? "0 10px 0 9px" : "0 16px"};gap:${small ? 8 : 7}px;
        ${outline ? "border:1px solid #243040;color:#0fbcff;" : "background:#0fbcff;color:#07131f;"}}
    </style>${this.hasAttribute("icon") ? svg(this.attr("icon"), 18) : ""}<slot></slot>`;
  }
}

const defs = {
  "oa-icon": OaIcon, "oa-app": OaApp, "oa-topbar": OaTopbar, "oa-sidebar": OaSidebar,
  "oa-nav-item": OaNavItem, "oa-nav-divider": OaNavDivider, "oa-arsenal": OaArsenal,
  "oa-filter-panel": OaFilterPanel, "oa-filter-group": OaFilterGroup, "oa-filter-row": OaFilterRow,
  "oa-toolbar": OaToolbar, "oa-card": OaCard, "oa-tag": OaTag, "oa-drawer": OaDrawer,
  "oa-tabs": OaTabs, "oa-tab": OaTab, "oa-alert": OaAlert, "oa-rules": OaRules,
  "oa-chip": OaChip, "oa-actions": OaActions, "oa-button": OaButton
};
Object.entries(defs).forEach(([tag, cls]) => customElements.define(tag, cls));
</script>
</body>
</html>
